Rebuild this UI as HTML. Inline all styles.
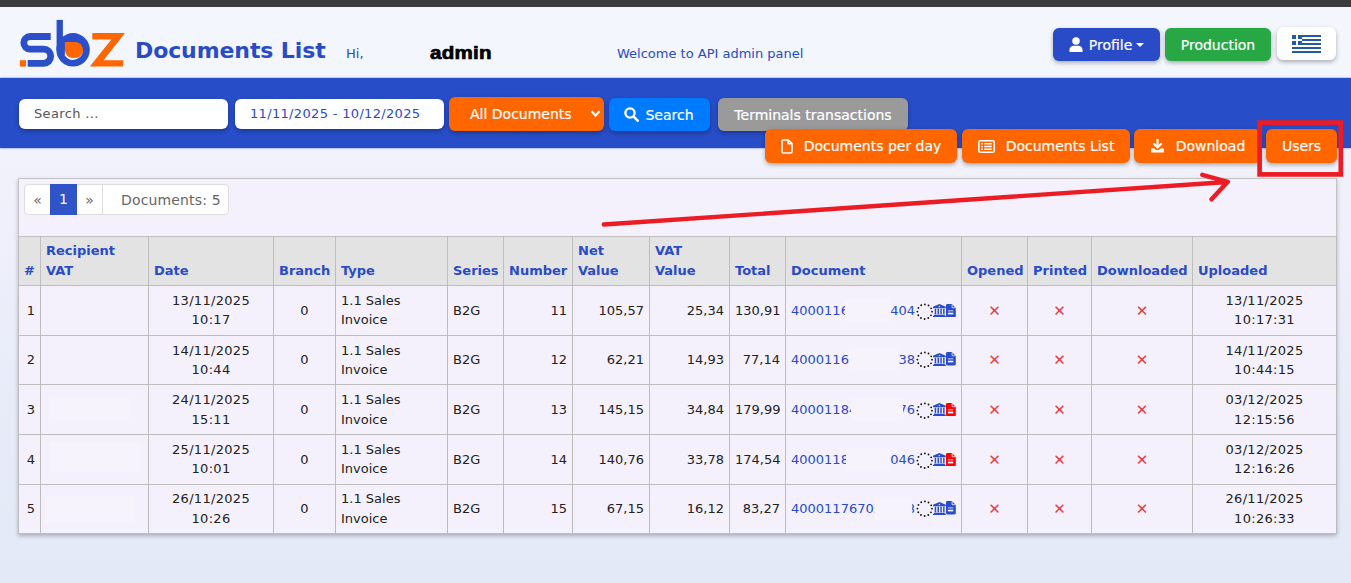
<!DOCTYPE html>
<html lang="en">
<head>
<meta charset="utf-8">
<title>Documents List</title>
<style>
*{box-sizing:border-box;margin:0;padding:0}
html,body{width:1351px;height:583px;overflow:hidden}
body{position:relative;font-family:"DejaVu Sans","Liberation Sans",sans-serif;font-size:13px;color:#222;background:linear-gradient(180deg,#f2f2fc 148px,#e9ecf9 360px,#e3e9f7 583px)}
.abs{position:absolute}
#topbar{left:0;top:0;width:1351px;height:7.5px;background:#3b3b3b}
#header{left:0;top:7px;width:1351px;height:71px;background:#f3f6fd}
#bluebar{left:0;top:78px;width:1351px;height:70px;background:#274dc8;box-shadow:0 0 2px rgba(39,77,200,.7)}
.cond{font-family:"DejaVu Sans","Liberation Sans",sans-serif;font-size:14px;-webkit-text-stroke:.2px currentColor}
#title{left:135px;top:36px;letter-spacing:-0.1px;font-size:22px;font-weight:bold;color:#294bc8;line-height:30px;white-space:nowrap}
#hi{left:346px;top:46px;font-size:13px;color:#294bc8;line-height:16px}
#admin{left:429.6px;top:42px;font-family:"Liberation Sans",sans-serif;font-weight:bold;font-size:19px;color:#000;line-height:22px;transform:scaleX(1.083);transform-origin:0 0;-webkit-text-stroke:.7px #000;letter-spacing:.2px}
#welcome{left:617px;top:46px;font-size:13px;color:#294bc8;line-height:16px;white-space:nowrap}
.btn{position:absolute;display:flex;align-items:center;justify-content:center;color:#fff;font-size:14px;border-radius:6px;white-space:nowrap;box-shadow:0 2px 4px rgba(0,0,0,.3)}
.inp{position:absolute;background:#fff;border-radius:6px;height:30px;top:99px;font-size:13px;line-height:30px;padding-left:15px;box-shadow:0 2px 4px rgba(0,0,0,.3)}
#wrap{left:18px;top:178px;width:1318.5px;height:356px;background:#f4f1fc;border:1px solid #c4c4c4;box-shadow:0 2px 4px rgba(0,0,0,.25)}
table{position:absolute;left:18px;top:236px;border-collapse:collapse;table-layout:fixed;width:1318px}
td,th{border:1px solid #bdbdbd;font-size:13px;line-height:19px;padding:0 5px;vertical-align:middle;overflow:hidden;white-space:nowrap}
th{background:#e3e3e3;color:#294bc8;font-weight:bold;text-align:left;vertical-align:bottom;padding-bottom:4px;height:49px;white-space:normal;line-height:20px}
td{background:#f4f1fc;color:#222}
.c{text-align:center}.dt{text-align:center;letter-spacing:.3px}.r{text-align:right}
.x{color:#ea3943;text-align:center;font-size:15px;padding-top:1px}
a{color:#294bc8;text-decoration:none}
.d{position:relative;height:19px}.ic{position:absolute}.da,.db{position:absolute;top:0;height:19px;overflow:hidden;white-space:nowrap}.db span{position:absolute;right:0;top:0}.m{position:absolute;background:#f6f3fd}

.r1 .t2,.r4 .t2{padding-bottom:2px}
.r3 .t2{line-height:20px}.r5 .t2{line-height:20px;padding-bottom:1px}
.r2 td:not(.t2),.r5 td:not(.t2){padding-bottom:2px}
.r2 td.x,.r5 td.x{padding:0 5px}
</style>
</head>
<body>
<div id="topbar" class="abs"></div>
<div id="header" class="abs"></div>
<div id="bluebar" class="abs"></div>

<svg class="abs" style="left:19px;top:18px" width="108" height="50" viewBox="19 18 108 50">
  <rect x="19.9" y="60.2" width="6.1" height="6.4" fill="#ff6600"/>
  <path d="M50.7 36.5 H30.15 A6.35 6.35 0 0 0 30.15 49.2 H43.65 A7.05 7.05 0 0 1 43.65 63.3 H27.7" fill="none" stroke="#2b4fc8" stroke-width="6.8"/>
  <rect x="56.6" y="19.9" width="6.3" height="30" fill="#2b4fc8"/>
  <circle cx="73.05" cy="49.85" r="16.75" fill="#2b4fc8"/>
  <path d="M64.9 50 V55.47 A9.9 9.9 0 0 0 82.95 49.85 Z" fill="#f3f6fd"/>
  <path d="M64.9 41.9 H75 A8 8 0 0 1 83 49.9 V50 A8 8 0 0 1 75 58 H72.9 A8 8 0 0 1 64.9 50 Z" fill="#ff6600"/>
  <path d="M92.3 33.1 H125 L103.5 60.2 H123.1 V66.6 H89.8 L111.3 39.5 H92.3 Z" fill="#ff6600"/>
</svg>

<div id="title" class="abs">Documents List</div>
<div id="hi" class="abs">Hi,</div>
<div id="admin" class="abs">admin</div>
<div id="welcome" class="abs">Welcome to API admin panel</div>

<div class="btn cond" style="left:1053px;top:28px;width:107px;height:33px;background:#294bc8">
  <svg width="14" height="15" viewBox="0 0 14 16" style="margin-right:6px"><circle cx="7" cy="4.2" r="4" fill="#fff"/><path d="M0 16 v-2.2 a4.4 4.4 0 0 1 4.4 -4.4 h5.2 a4.4 4.4 0 0 1 4.4 4.4 V16 Z" fill="#fff"/></svg>Profile<span style="display:inline-block;margin-left:4px;border-left:4px solid transparent;border-right:4px solid transparent;border-top:4px solid #fff"></span>
</div>
<div class="btn cond" style="left:1165px;top:28px;width:106px;height:33px;background:#28a745">Production</div>
<div class="btn" style="left:1277px;top:27px;width:59px;height:33px;background:#fff">
  <svg width="29" height="18" viewBox="0 0 29 18"><rect width="29" height="18" fill="#fff"/><g fill="#2458a8"><rect y="0" width="29" height="2"/><rect y="4" width="29" height="2"/><rect y="8" width="29" height="2"/><rect y="12" width="29" height="2"/><rect y="16" width="29" height="2"/><rect width="10" height="10"/></g><rect x="4" y="0" width="2" height="10" fill="#fff"/><rect x="0" y="4" width="10" height="2" fill="#fff"/></svg>
</div>

<div class="inp" style="left:19px;width:209px;color:#555;letter-spacing:.35px">Search ...</div>
<div class="inp" style="left:235px;width:209px;color:#294bc8;letter-spacing:.33px">11/11/2025 - 10/12/2025</div>
<div class="btn cond" style="left:449px;top:97px;width:155px;height:34px;background:#ff6600;justify-content:flex-start;padding-left:21px">All Documents
  <svg class="abs" style="right:3.5px;top:13px" width="11" height="8" viewBox="0 0 11 8"><path d="M1.5 1.3 L5.5 5.6 L9.5 1.3" fill="none" stroke="#fff" stroke-width="2.2"/></svg>
</div>
<div class="btn cond" style="left:609px;top:98px;width:101px;height:33px;background:#007bff">
  <svg width="15" height="15" viewBox="0 0 15 15" style="margin-right:6px;margin-left:-1px"><circle cx="6" cy="6" r="4.6" fill="none" stroke="#fff" stroke-width="2.4"/><path d="M9.6 9.6 L13.7 13.7" stroke="#fff" stroke-width="2.6" stroke-linecap="round"/></svg>Search
</div>
<div class="btn cond" style="left:718px;top:98px;width:190px;height:33px;background:#9a9a9a">Terminals transactions</div>

<div class="btn cond" style="left:765px;top:129px;width:192px;height:34px;background:#ff6600">
  <svg width="12" height="15" viewBox="0 0 12 15" style="margin-right:11px"><path d="M1 2.2 a1.2 1.2 0 0 1 1.2 -1.2 H7.4 L11 4.6 V12.8 a1.2 1.2 0 0 1 -1.2 1.2 H2.2 a1.2 1.2 0 0 1 -1.2 -1.2 Z M7.2 1 V4.8 H11" fill="none" stroke="#fff" stroke-width="1.6" stroke-linejoin="round"/></svg>Documents per day
</div>
<div class="btn cond" style="left:962px;top:129px;width:168px;height:34px;background:#ff6600">
  <svg width="17" height="13" viewBox="0 0 17 13" style="margin-right:11px"><rect x="0.8" y="0.8" width="15.4" height="11.4" rx="1.4" fill="none" stroke="#fff" stroke-width="1.6"/><path d="M3.2 3.8h1.6M6.2 3.8h7.6M3.2 6.5h1.6M6.2 6.5h7.6M3.2 9.2h1.6M6.2 9.2h7.6" stroke="#fff" stroke-width="1.5"/></svg>Documents List
</div>
<div class="btn cond" style="left:1134px;top:129px;width:127px;height:34px;background:#ff6600">
  <svg width="15" height="14" viewBox="0 0 15 14" style="margin-right:11px"><path d="M7.5 0.5 V8 M4 5 L7.5 8.5 L11 5" fill="none" stroke="#fff" stroke-width="2.2" stroke-linecap="round" stroke-linejoin="round"/><path d="M1 9.5 H4.5 L6 11 H9 L10.5 9.5 H14 V13.5 H1 Z" fill="#fff"/></svg>Download
</div>
<div class="btn cond" style="left:1266px;top:129px;width:71px;height:34px;background:#ff6600">Users</div>

<div id="wrap" class="abs"></div>

<div class="abs" style="left:24px;top:184px;height:31px;width:205px;background:#fff;border:1px solid #ddd;border-radius:4px;font-size:14px;color:#666;line-height:30px">
  <span class="abs" style="left:0;width:25px;text-align:center;color:#666">«</span>
  <span class="abs" style="left:25px;top:-1px;width:27px;height:31px;background:#3054c8;color:#fff;text-align:center;line-height:31px">1</span>
  <span class="abs" style="left:52px;width:26px;text-align:center;border-right:1px solid #ddd;height:29px">»</span>
  <span class="abs" style="left:96px;white-space:nowrap;color:#666;letter-spacing:.15px">Documents: 5</span>
</div>

<table>
<colgroup>
<col style="width:22px"><col style="width:108px"><col style="width:125px"><col style="width:62px"><col style="width:112px"><col style="width:56px"><col style="width:69px"><col style="width:77px"><col style="width:80px"><col style="width:56px"><col style="width:176px"><col style="width:66px"><col style="width:64px"><col style="width:101px"><col style="width:144px">
</colgroup>
<tr><th>#</th><th>Recipient VAT</th><th>Date</th><th>Branch</th><th>Type</th><th>Series</th><th>Number</th><th>Net Value</th><th>VAT Value</th><th>Total</th><th>Document</th><th>Opened</th><th>Printed</th><th>Downloaded</th><th>Uploaded</th></tr>
<tr class="r1" style="height:50px"><td class="r">1</td><td></td><td class="dt t2">13/11/2025<br>10:17</td><td class="c">0</td><td class="t2">1.1 Sales<br>Invoice</td><td>B2G</td><td class="r">11</td><td class="r">105,57</td><td class="r">25,34</td><td class="r">130,91</td><td class="doc"><div class="d"><a class="da" style="width:54.0px">4000116</a><a class="db" style="left:99.0px;width:25.1px"><span>404</span></a><i class="m" style="left:54.0px;width:45.0px;top:-2px;height:23px"></i><svg class="ic" style="left:124.6px;top:1.8px" width="17.4" height="17.4" viewBox="-8.7 -8.7 17.4 17.4"><circle r="7.3" fill="none" stroke="#111" stroke-width="1.85" stroke-linecap="round" stroke-dasharray="0 3.8223"/></svg><svg class="ic" style="left:142px;top:3.2px" width="12.8" height="13" viewBox="0 0 12.8 13"><path d="M6.4 0 L12.8 2.7 V4.2 H0 V2.7 Z M1.7 4.8 h1.5 v5.5 h-1.5 Z M4.5 4.8 h1.5 v5.5 h-1.5 Z M7.3 4.8 h1.5 v5.5 h-1.5 Z M10.1 4.8 h1.5 v5.5 h-1.5 Z M1 10.7 H11.8 V11.7 H12.8 V13 H0 V11.7 H1 Z" fill="#2a4cc8"/><circle cx="6.4" cy="2.5" r="0.75" fill="#f4f1fc"/></svg><svg class="ic" style="left:155px;top:2.9px" width="9.8" height="13.5" viewBox="0 0 9.8 13.5"><path d="M1.4 0 H5.8 L9.8 4 V12.1 A1.4 1.4 0 0 1 8.4 13.5 H1.4 A1.4 1.4 0 0 1 0 12.1 V1.4 A1.4 1.4 0 0 1 1.4 0 Z" fill="#2a4cc8"/><path d="M6.1 0.3 V3.7 H9.5" fill="none" stroke="#f4f1fc" stroke-width="0.8"/><rect x="1.9" y="6.5" width="5.4" height="0.8" fill="#f4f1fc"/><rect x="1.9" y="8.7" width="5.4" height="1.7" fill="#f4f1fc"/></svg></div></td><td class="x">✕</td><td class="x">✕</td><td class="x">✕</td><td class="dt t2">13/11/2025<br>10:17:31</td></tr>
<tr class="r2" style="height:49px"><td class="r">2</td><td></td><td class="dt t2">14/11/2025<br>10:44</td><td class="c">0</td><td class="t2">1.1 Sales<br>Invoice</td><td>B2G</td><td class="r">12</td><td class="r">62,21</td><td class="r">14,93</td><td class="r">77,14</td><td class="doc"><div class="d"><a class="da" style="width:58.0px">4000116</a><a class="db" style="left:107.0px;width:17.1px"><span>38</span></a><i class="m" style="left:58.0px;width:49.0px;top:-2px;height:23px"></i><svg class="ic" style="left:124.6px;top:1.8px" width="17.4" height="17.4" viewBox="-8.7 -8.7 17.4 17.4"><circle r="7.3" fill="none" stroke="#111" stroke-width="1.85" stroke-linecap="round" stroke-dasharray="0 3.8223"/></svg><svg class="ic" style="left:142px;top:3.2px" width="12.8" height="13" viewBox="0 0 12.8 13"><path d="M6.4 0 L12.8 2.7 V4.2 H0 V2.7 Z M1.7 4.8 h1.5 v5.5 h-1.5 Z M4.5 4.8 h1.5 v5.5 h-1.5 Z M7.3 4.8 h1.5 v5.5 h-1.5 Z M10.1 4.8 h1.5 v5.5 h-1.5 Z M1 10.7 H11.8 V11.7 H12.8 V13 H0 V11.7 H1 Z" fill="#2a4cc8"/><circle cx="6.4" cy="2.5" r="0.75" fill="#f4f1fc"/></svg><svg class="ic" style="left:155px;top:2.9px" width="9.8" height="13.5" viewBox="0 0 9.8 13.5"><path d="M1.4 0 H5.8 L9.8 4 V12.1 A1.4 1.4 0 0 1 8.4 13.5 H1.4 A1.4 1.4 0 0 1 0 12.1 V1.4 A1.4 1.4 0 0 1 1.4 0 Z" fill="#2a4cc8"/><path d="M6.1 0.3 V3.7 H9.5" fill="none" stroke="#f4f1fc" stroke-width="0.8"/><rect x="1.9" y="6.5" width="5.4" height="0.8" fill="#f4f1fc"/><rect x="1.9" y="8.7" width="5.4" height="1.7" fill="#f4f1fc"/></svg></div></td><td class="x">✕</td><td class="x">✕</td><td class="x">✕</td><td class="dt t2">14/11/2025<br>10:44:15</td></tr>
<tr class="r3" style="height:50px"><td class="r">3</td><td></td><td class="dt t2">24/11/2025<br>15:11</td><td class="c">0</td><td class="t2">1.1 Sales<br>Invoice</td><td>B2G</td><td class="r">13</td><td class="r">145,15</td><td class="r">34,84</td><td class="r">179,99</td><td class="doc"><div class="d"><a class="da" style="width:60.0px">40001184</a><a class="db" style="left:112.0px;width:12.1px"><span>76</span></a><i class="m" style="left:60.0px;width:52.0px;top:-2px;height:23px"></i><svg class="ic" style="left:124.6px;top:1.8px" width="17.4" height="17.4" viewBox="-8.7 -8.7 17.4 17.4"><circle r="7.3" fill="none" stroke="#111" stroke-width="1.85" stroke-linecap="round" stroke-dasharray="0 3.8223"/></svg><svg class="ic" style="left:142px;top:3.2px" width="12.8" height="13" viewBox="0 0 12.8 13"><path d="M6.4 0 L12.8 2.7 V4.2 H0 V2.7 Z M1.7 4.8 h1.5 v5.5 h-1.5 Z M4.5 4.8 h1.5 v5.5 h-1.5 Z M7.3 4.8 h1.5 v5.5 h-1.5 Z M10.1 4.8 h1.5 v5.5 h-1.5 Z M1 10.7 H11.8 V11.7 H12.8 V13 H0 V11.7 H1 Z" fill="#2a4cc8"/><circle cx="6.4" cy="2.5" r="0.75" fill="#f4f1fc"/></svg><svg class="ic" style="left:155px;top:2.9px" width="9.8" height="13.5" viewBox="0 0 9.8 13.5"><path d="M1.4 0 H5.8 L9.8 4 V12.1 A1.4 1.4 0 0 1 8.4 13.5 H1.4 A1.4 1.4 0 0 1 0 12.1 V1.4 A1.4 1.4 0 0 1 1.4 0 Z" fill="#ff0000"/><path d="M6.1 0.3 V3.7 H9.5" fill="none" stroke="#f4f1fc" stroke-width="0.8"/><rect x="1.9" y="6.5" width="5.4" height="0.8" fill="#f4f1fc"/><rect x="1.9" y="8.7" width="5.4" height="1.7" fill="#f4f1fc"/></svg></div></td><td class="x">✕</td><td class="x">✕</td><td class="x">✕</td><td class="dt t2">03/12/2025<br>12:15:56</td></tr>
<tr class="r4" style="height:50px"><td class="r">4</td><td></td><td class="dt t2">25/11/2025<br>10:01</td><td class="c">0</td><td class="t2">1.1 Sales<br>Invoice</td><td>B2G</td><td class="r">14</td><td class="r">140,76</td><td class="r">33,78</td><td class="r">174,54</td><td class="doc"><div class="d"><a class="da" style="width:55.0px">4000118</a><a class="db" style="left:99.0px;width:25.1px"><span>046</span></a><i class="m" style="left:55.0px;width:44.0px;top:-2px;height:23px"></i><svg class="ic" style="left:124.6px;top:1.8px" width="17.4" height="17.4" viewBox="-8.7 -8.7 17.4 17.4"><circle r="7.3" fill="none" stroke="#111" stroke-width="1.85" stroke-linecap="round" stroke-dasharray="0 3.8223"/></svg><svg class="ic" style="left:142px;top:3.2px" width="12.8" height="13" viewBox="0 0 12.8 13"><path d="M6.4 0 L12.8 2.7 V4.2 H0 V2.7 Z M1.7 4.8 h1.5 v5.5 h-1.5 Z M4.5 4.8 h1.5 v5.5 h-1.5 Z M7.3 4.8 h1.5 v5.5 h-1.5 Z M10.1 4.8 h1.5 v5.5 h-1.5 Z M1 10.7 H11.8 V11.7 H12.8 V13 H0 V11.7 H1 Z" fill="#2a4cc8"/><circle cx="6.4" cy="2.5" r="0.75" fill="#f4f1fc"/></svg><svg class="ic" style="left:155px;top:2.9px" width="9.8" height="13.5" viewBox="0 0 9.8 13.5"><path d="M1.4 0 H5.8 L9.8 4 V12.1 A1.4 1.4 0 0 1 8.4 13.5 H1.4 A1.4 1.4 0 0 1 0 12.1 V1.4 A1.4 1.4 0 0 1 1.4 0 Z" fill="#ff0000"/><path d="M6.1 0.3 V3.7 H9.5" fill="none" stroke="#f4f1fc" stroke-width="0.8"/><rect x="1.9" y="6.5" width="5.4" height="0.8" fill="#f4f1fc"/><rect x="1.9" y="8.7" width="5.4" height="1.7" fill="#f4f1fc"/></svg></div></td><td class="x">✕</td><td class="x">✕</td><td class="x">✕</td><td class="dt t2">03/12/2025<br>12:16:26</td></tr>
<tr class="r5" style="height:49px"><td class="r">5</td><td></td><td class="dt t2">26/11/2025<br>10:26</td><td class="c">0</td><td class="t2">1.1 Sales<br>Invoice</td><td>B2G</td><td class="r">15</td><td class="r">67,15</td><td class="r">16,12</td><td class="r">83,27</td><td class="doc"><div class="d"><a class="da" style="width:84.4px">40001176702</a><a class="db" style="left:120.6px;width:3.5px"><span>8</span></a><i class="m" style="left:84.4px;width:36.2px;top:-2px;height:23px"></i><svg class="ic" style="left:124.6px;top:1.8px" width="17.4" height="17.4" viewBox="-8.7 -8.7 17.4 17.4"><circle r="7.3" fill="none" stroke="#111" stroke-width="1.85" stroke-linecap="round" stroke-dasharray="0 3.8223"/></svg><svg class="ic" style="left:142px;top:3.2px" width="12.8" height="13" viewBox="0 0 12.8 13"><path d="M6.4 0 L12.8 2.7 V4.2 H0 V2.7 Z M1.7 4.8 h1.5 v5.5 h-1.5 Z M4.5 4.8 h1.5 v5.5 h-1.5 Z M7.3 4.8 h1.5 v5.5 h-1.5 Z M10.1 4.8 h1.5 v5.5 h-1.5 Z M1 10.7 H11.8 V11.7 H12.8 V13 H0 V11.7 H1 Z" fill="#2a4cc8"/><circle cx="6.4" cy="2.5" r="0.75" fill="#f4f1fc"/></svg><svg class="ic" style="left:155px;top:2.9px" width="9.8" height="13.5" viewBox="0 0 9.8 13.5"><path d="M1.4 0 H5.8 L9.8 4 V12.1 A1.4 1.4 0 0 1 8.4 13.5 H1.4 A1.4 1.4 0 0 1 0 12.1 V1.4 A1.4 1.4 0 0 1 1.4 0 Z" fill="#2a4cc8"/><path d="M6.1 0.3 V3.7 H9.5" fill="none" stroke="#f4f1fc" stroke-width="0.8"/><rect x="1.9" y="6.5" width="5.4" height="0.8" fill="#f4f1fc"/><rect x="1.9" y="8.7" width="5.4" height="1.7" fill="#f4f1fc"/></svg></div></td><td class="x">✕</td><td class="x">✕</td><td class="x">✕</td><td class="dt t2">26/11/2025<br>10:26:33</td></tr>
</table>

<i class="m" style="left:49px;top:397px;width:80px;height:23px"></i>
<i class="m" style="left:50px;top:442px;width:90px;height:30px"></i>
<i class="m" style="left:45px;top:496px;width:90px;height:27px"></i>
<svg class="abs" style="left:0;top:0;pointer-events:none" width="1351" height="583" viewBox="0 0 1351 583">
  <rect x="1259.6" y="122.6" width="81.2" height="51.8" fill="none" stroke="#ed1c24" stroke-width="4.7"/>
  <path d="M603.8 224.5 L1227.5 182 M1202.3 174.8 L1227.8 181.8 L1211.5 199.3" fill="none" stroke="#ed1c24" stroke-width="4.4" stroke-linecap="round" stroke-linejoin="round"/>
</svg>
</body>
</html>
